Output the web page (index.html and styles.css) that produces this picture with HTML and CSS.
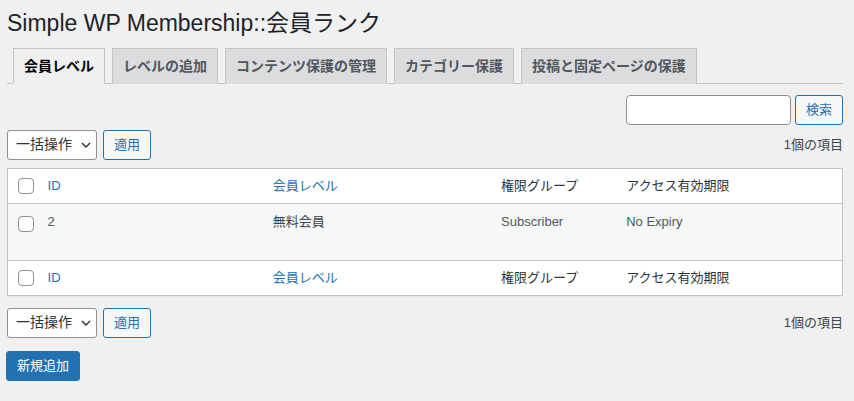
FILE: index.html
```html
<!DOCTYPE html>
<html lang="ja">
<head>
<meta charset="utf-8">
<title>Simple WP Membership::会員ランク</title>
<link rel="stylesheet" href="styles.css">
</head>
<body>
<div class="wrap">
  <h1 class="page-title">Simple WP Membership::会員ランク</h1>
  <nav class="nav-tabs">
    <a class="nav-tab active">会員レベル</a>
    <a class="nav-tab">レベルの追加</a>
    <a class="nav-tab">コンテンツ保護の管理</a>
    <a class="nav-tab">カテゴリー保護</a>
    <a class="nav-tab">投稿と固定ページの保護</a>
  </nav>

  <div class="search-box">
    <input class="search-input" type="text">
    <button class="btn">検索</button>
  </div>

  <div class="tablenav">
    <div class="actions">
      <div class="select">一括操作<svg class="chev" width="10" height="6" viewBox="0 0 10 6"><path d="M1 1l4 4 4-4" fill="none" stroke="#2c3338" stroke-width="1.4"/></svg></div>
      <button class="btn">適用</button>
    </div>
    <span class="count">1個の項目</span>
  </div>

  <table class="list">
    <colgroup>
      <col class="c-check"><col class="c-id"><col class="c-level"><col class="c-role"><col class="c-exp">
    </colgroup>
    <thead>
      <tr><th class="check"><span class="cb"></span></th><th><a class="link">ID</a></th><th><a class="link">会員レベル</a></th><th>権限グループ</th><th>アクセス有効期限</th></tr>
    </thead>
    <tbody>
      <tr class="row"><td class="check"><span class="cb"></span></td><td>2</td><td class="strong">無料会員</td><td>Subscriber</td><td>No Expiry</td></tr>
    </tbody>
    <tfoot>
      <tr><th class="check"><span class="cb"></span></th><th><a class="link">ID</a></th><th><a class="link">会員レベル</a></th><th>権限グループ</th><th>アクセス有効期限</th></tr>
    </tfoot>
  </table>

  <div class="tablenav bottom">
    <div class="actions">
      <div class="select">一括操作<svg class="chev" width="10" height="6" viewBox="0 0 10 6"><path d="M1 1l4 4 4-4" fill="none" stroke="#2c3338" stroke-width="1.4"/></svg></div>
      <button class="btn">適用</button>
    </div>
    <span class="count">1個の項目</span>
  </div>

  <button class="btn primary">新規追加</button>
</div>
</body>
</html>
```

FILE: styles.css
```css
* { box-sizing: border-box; }
html, body { margin: 0; padding: 0; }
body {
  background: #f0f0f1;
  color: #3c434a;
  font-family: "Liberation Sans", "Noto Sans CJK JP", sans-serif;
  font-size: 13px;
  line-height: 1.4;
  width: 854px;
  height: 401px;
  overflow: hidden;
}
.wrap { padding: 0 11px 0 7px; }
.page-title {
  margin: 0;
  padding: 8px 0 0;
  font-size: 23px;
  font-weight: 400;
  line-height: 30px;
  color: #1d2327;
}
.nav-tabs {
  display: flex;
  margin-top: 10px;
  border-bottom: 1px solid #c3c4c7;
  padding-left: 0;
}
.nav-tab {
  display: block;
  margin-left: 7px;
  margin-bottom: -1px;
  padding: 5px 10px;
  border: 1px solid #c3c4c7;
  border-bottom: none;
  background: #dcdcde;
  color: #50575e;
  font-size: 14px;
  font-weight: 700;
  line-height: 24px;
  text-decoration: none;
}
.nav-tab:first-child { margin-left: 6px; }
.nav-tab.active {
  background: #f0f0f1;
  color: #000;
  border-bottom: 1px solid #f0f0f1;
}
.search-box {
  display: flex;
  justify-content: flex-end;
  gap: 4px;
  margin-top: 11px;
}
.search-input {
  width: 165px;
  height: 30px;
  border: 1px solid #8c8f94;
  border-radius: 4px;
  background: #fff;
  margin: 0;
}
.btn {
  height: 30px;
  padding: 0 10px;
  border: 1px solid #2271b1;
  border-radius: 3px;
  background: #f6f7f7;
  color: #2271b1;
  font-family: inherit;
  font-size: 13px;
  line-height: 28px;
  margin: 0;
}
.btn.primary {
  display: block;
  margin-top: 13px;
  margin-left: -1px;
  background: #2271b1;
  color: #fff;
  padding: 0 10px;
}
.tablenav {
  display: flex;
  justify-content: space-between;
  align-items: center;
  margin-top: 5px;
  height: 30px;
}
.tablenav.bottom { margin-top: 12px; }
.actions { display: flex; gap: 6px; }
.select {
  display: flex;
  align-items: center;
  width: 90px;
  height: 30px;
  padding: 0 0 0 8px;
  border: 1px solid #8c8f94;
  border-radius: 3px;
  background: #fff;
  color: #2c3338;
  font-size: 14px;
}
.chev { margin-left: 9px; }
.count { color: #3c434a; font-size: 13px; }
.list {
  width: 836px;
  margin-top: 8px;
  border-collapse: collapse;
  border: 1px solid #c3c4c7;
  background: #fff;
  box-shadow: 0 1px 1px rgba(0,0,0,.04);
  table-layout: fixed;
}
.c-check { width: 30px; }
.c-id { width: 225px; }
.c-level { width: 228px; }
.c-role { width: 125px; }
.c-exp { width: 226px; }
th, td {
  text-align: left;
  font-weight: 400;
  padding: 8px 10px;
  line-height: 18px;
  vertical-align: middle;
}
thead th {
  height: 35px;
  color: #2c3338;
  font-size: 13px;
  border-bottom: 1px solid #c3c4c7;
}
tfoot th {
  height: 35px;
  color: #2c3338;
  border-top: 1px solid #c3c4c7;
}
.row td {
  background: #f6f7f7;
  color: #50575e;
  height: 57px;
  vertical-align: top;
  padding-top: 9px;
}
.row td.strong { color: #3c434a; }
.check { padding: 0 0 0 10px; }
.row td.check { padding: 12px 0 0 10px; }
.cb {
  display: block;
  width: 16px;
  height: 16px;
  border: 1px solid #8c8f94;
  border-radius: 4px;
  background: #fff;
}
.link { color: #2271b1; text-decoration: none; }
```
